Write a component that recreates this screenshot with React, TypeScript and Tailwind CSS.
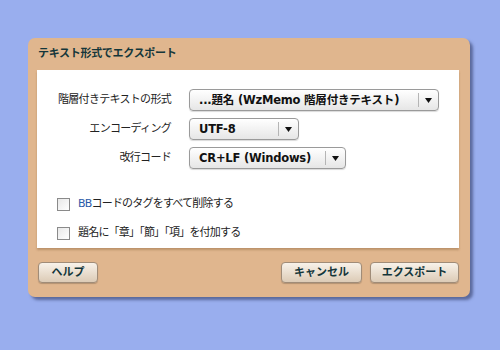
import React from "react";

const font = { fontFamily: '"DejaVu Sans", "Noto Sans CJK JP", sans-serif' };

function Select({ value, width }: { value: string; width: number }) {
  return (
    <div
      className="flex h-[22px] items-center rounded-[4px] border border-[#9a9a9a] bg-gradient-to-b from-[#ffffff] to-[#e6e6e6] shadow-[0_1px_1px_rgba(0,0,0,0.15)]"
      style={{ width }}
    >
      <div className="flex-1 whitespace-nowrap pl-[9px] text-[11.5px] font-bold leading-[14px] tracking-[-0.2px] text-[#111]">{value}</div>
      <div className="h-[14px] w-px bg-[#b5b5b5]" />
      <div className="flex w-[19px] items-center justify-center">
        <svg width="7" height="5" viewBox="0 0 7 5">
          <path d="M0 0h7L3.5 5z" fill="#111" />
        </svg>
      </div>
    </div>
  );
}

function Check({ children }: { children: React.ReactNode }) {
  return (
    <div className="flex items-center gap-[8px]">
      <div className="h-[13px] w-[13px] border border-[#8a8a8a] bg-gradient-to-br from-[#e8e8e8] to-[#ffffff]" />
      <div className="text-[11px] leading-[14px] tracking-[-0.8px] text-[#222]">{children}</div>
    </div>
  );
}

function Btn({ children, width }: { children: React.ReactNode; width: number }) {
  return (
    <div
      className="flex h-[21px] items-center justify-center rounded-[4px] border border-[#a08c78] bg-gradient-to-b from-[#f8f2ea] to-[#dccbb6] text-[11px] font-bold leading-[14px] text-[#14363a] shadow-[0_1px_1px_rgba(0,0,0,0.2)]"
      style={{ width }}
    >
      {children}
    </div>
  );
}

export default function App() {
  return (
    <div className="h-[350px] w-[500px] overflow-hidden bg-[#99aeee] pl-[28px] pt-[38px]" style={font}>
      <div className="flex h-[259px] w-[442px] flex-col rounded-[7px] bg-[#e0b68e] shadow-[3px_3px_3px_rgba(40,50,90,0.55)]">
        <div className="flex h-[32px] items-center pl-[10px] text-[11px] font-bold tracking-[-0.3px] text-[#14363a]">
          テキスト形式でエクスポート
        </div>
        <div className="ml-[9px] mr-[11px] flex h-[178px] flex-col bg-white pt-[19px] shadow-[0_2px_2px_rgba(120,80,40,0.35)]">
          <div className="flex flex-col gap-[7px]">
            <div className="flex items-center">
              <div className="w-[134px] text-right text-[11px] tracking-[-0.7px] text-[#222]">階層付きテキストの形式</div>
              <div className="ml-[18px]">
                <Select value="...題名 (WzMemo 階層付きテキスト)" width={250} />
              </div>
            </div>
            <div className="flex items-center">
              <div className="w-[134px] text-right text-[11px] tracking-[-0.7px] text-[#222]">エンコーディング</div>
              <div className="ml-[18px]">
                <Select value="UTF-8" width={110} />
              </div>
            </div>
            <div className="flex items-center">
              <div className="w-[134px] text-right text-[11px] tracking-[-0.7px] text-[#222]">改行コード</div>
              <div className="ml-[18px]">
                <Select value="CR+LF (Windows)" width={157} />
              </div>
            </div>
          </div>
          <div className="ml-[20px] mt-[28px] flex flex-col gap-[15px]">
            <Check>
              <span className="text-[#2a5aa8]">BB</span>コードのタグをすべて削除する
            </Check>
            <Check>題名に「章」「節」「項」を付加する</Check>
          </div>
        </div>
        <div className="mt-[14px] flex items-center pl-[10px] pr-[11px]">
          <Btn width={60}>ヘルプ</Btn>
          <div className="flex-1" />
          <Btn width={81}>キャンセル</Btn>
          <div className="w-[8px]" />
          <Btn width={89}>エクスポート</Btn>
        </div>
      </div>
    </div>
  );
}
